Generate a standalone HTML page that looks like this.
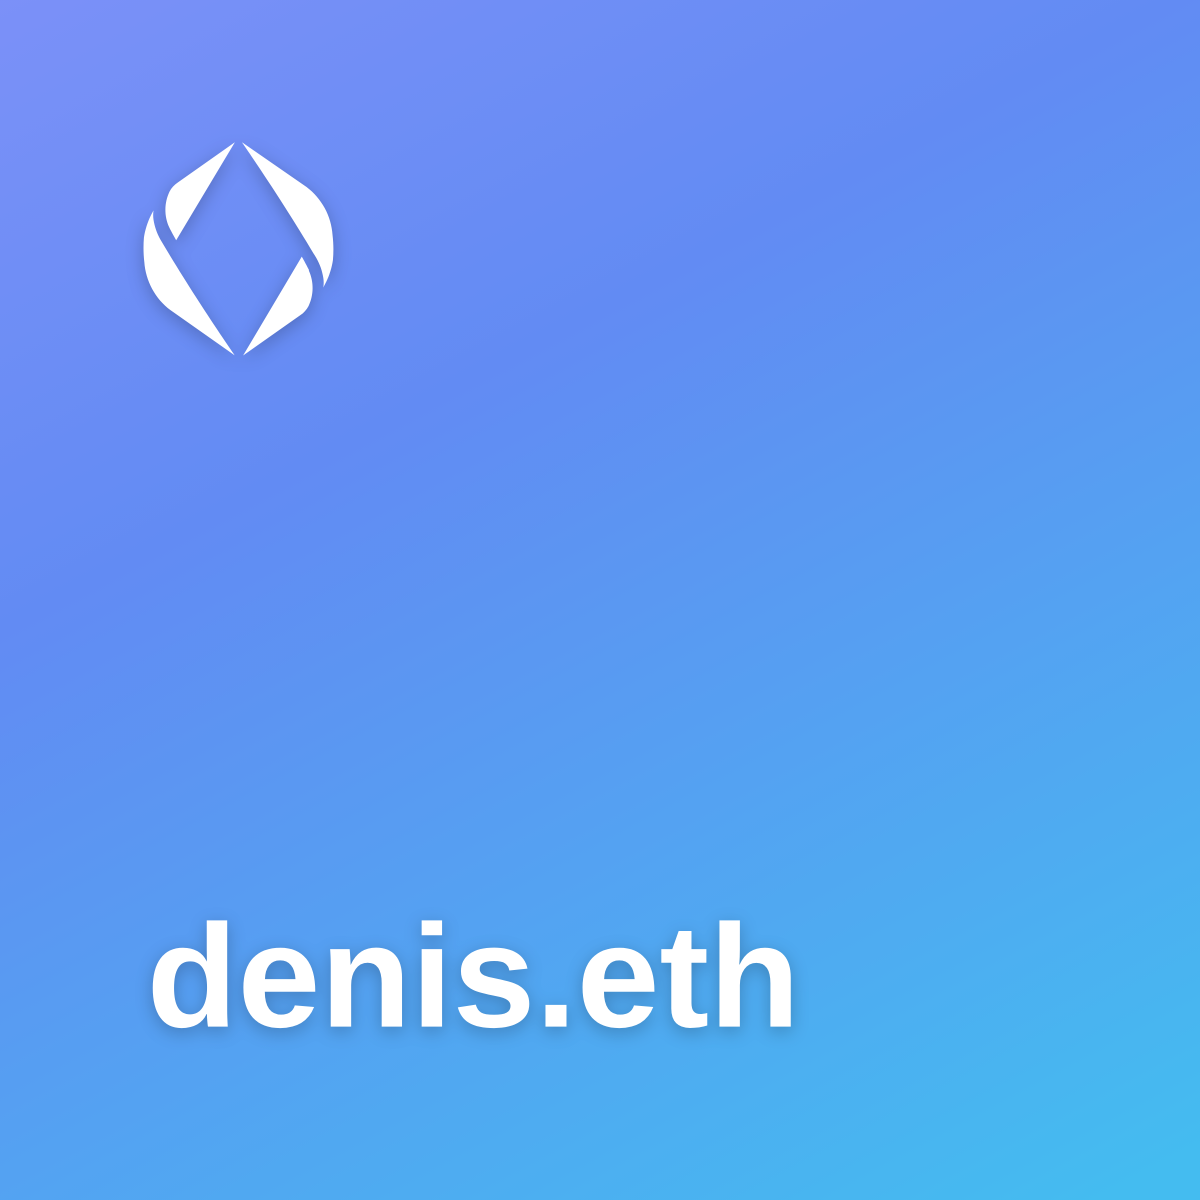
<!DOCTYPE html>
<html><head><meta charset="utf-8"><style>html,body{margin:0;padding:0;width:1200px;height:1200px;overflow:hidden}svg{display:block}</style></head><body>
<svg width="1200" height="1200" viewBox="0 0 270 270" xmlns="http://www.w3.org/2000/svg">
<defs>
<linearGradient id="B" x1="190.5" y1="302" x2="-64" y2="-172.5" gradientUnits="userSpaceOnUse"><stop stop-color="#44bcf0"/><stop offset=".428" stop-color="#628bf3"/><stop offset="1" stop-color="#a099ff"/></linearGradient>
<filter id="A" x="-20%" y="-20%" width="140%" height="140%" color-interpolation-filters="sRGB"><feDropShadow dx="0" dy="1" stdDeviation="2" flood-opacity=".225"/></filter>
</defs>
<path fill="url(#B)" d="M0 0h270v270H0z"/>
<g filter="url(#A)" fill="#fff">
<path d="M38.0397 51.0875C38.5012 52.0841 39.6435 54.0541 39.6435 54.0541L52.8484 32L39.9608 41.0921C39.1928 41.6096 38.5628 42.3102 38.1263 43.1319C37.5393 44.3716 37.2274 45.7259 37.2125 47.1C37.1975 48.4742 37.4799 49.8351 38.0397 51.0875Z"/>
<path d="M32.4695 58.9589C32.6168 61.0701 33.2147 63.1253 34.2231 64.9873C35.2315 66.8493 36.6273 68.4752 38.3172 69.7565L52.8534 80C52.8534 80 43.7585 66.9127 36.0834 53.8896C35.3064 52.5135 34.7839 51.0102 34.5409 49.4512C34.4333 48.7453 34.4333 48.0273 34.5409 47.3214C34.3406 47.6925 33.9518 48.4523 33.9518 48.4523C33.1732 50.0365 32.6436 51.7304 32.3818 53.4736C32.2311 55.3004 32.2604 57.1374 32.4695 58.9589Z"/>
<path d="M69.4934 60.6994C69.0249 59.7028 67.9015 57.7328 67.9015 57.7328L54.6963 80L67.5841 70.9146C68.3521 70.3971 68.982 69.6964 69.4185 68.8748C70.0056 67.6351 70.3175 66.2808 70.3324 64.9066C70.3474 63.5325 70.065 62.1716 69.5052 60.9192L69.4934 60.6994Z"/>
<path d="M74.8216 52.8697C74.6744 50.7586 74.0764 48.7033 73.068 46.8413C72.0596 44.9793 70.6639 43.3534 68.974 42.0721L54.4377 32C54.4377 32 63.5326 45.0873 71.2078 58.1104C71.9848 59.4865 72.5073 60.9898 72.7503 62.5488C72.8579 63.2547 72.8579 63.9727 72.7503 64.6786C72.9506 64.3075 73.3394 63.5477 73.3394 63.5477C74.1179 61.9635 74.6475 60.2696 74.9093 58.5264C75.0781 56.6405 75.0488 54.7416 74.8216 52.8697Z"/>
</g>
<text x="33" y="231" font-family="Liberation Sans, sans-serif" font-weight="bold" font-size="33" fill="#fff" filter="url(#A)" textLength="147" lengthAdjust="spacingAndGlyphs">denis.eth</text>
</svg>
</body></html>
